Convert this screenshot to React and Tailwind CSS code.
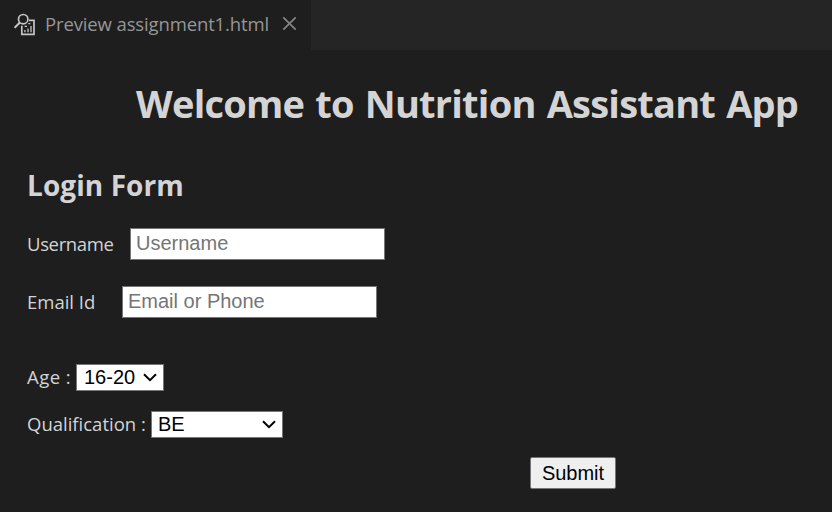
const label = "shrink-0 whitespace-nowrap leading-6";
const control = "box-border border border-[#767676] bg-white font-['Liberation_Sans',Arial,sans-serif] text-[20px] leading-6";

function PreviewIcon() {
  return (
    <svg width="22" height="24" viewBox="0 0 22 24" fill="none" stroke="#c5c5c5" className="shrink-0">
      <circle cx="9.2" cy="6.2" r="4.7" strokeWidth="1.7" />
      <path d="M5.8 9.6L.6 14.8" strokeWidth="2.1" />
      <path d="M15 7.4h5v14H7.8v-8.6" strokeWidth="1.7" />
      <path d="M14.3 10.6h2M10.6 13.4h2.4" strokeWidth="1.3" />
      <path d="M10.9 17v2.2M14 15.5v3.7M17 13v6.2" strokeWidth="1.3" />
    </svg>
  );
}

function Chevron() {
  return (
    <svg width="14" height="9" viewBox="0 0 14 9" fill="none" stroke="#000" strokeWidth="2" className="shrink-0">
      <path d="M1 1.2l6 6 6-6" />
    </svg>
  );
}

function Select({ value, className }) {
  return (
    <button type="button" className={`${control} flex h-[27px] shrink-0 items-center justify-between text-black ${className}`}>
      <span className="pb-px leading-6">{value}</span>
      <Chevron />
    </button>
  );
}

export default function App() {
  return (
    <div className="h-[512px] w-[832px] overflow-hidden bg-[#1e1e1e] font-['Open_Sans','Noto_Sans',sans-serif] text-[#d4d4d4]">
      <header className="flex h-[50px] bg-[#252526]">
        <div className="flex h-[50px] w-[311px] items-center bg-[#1e1e1e] pl-[14px]">
          <PreviewIcon />
          <span className="ml-[9px] w-[237px] whitespace-nowrap pb-[2px] text-[18.5px] leading-6 tracking-[-0.13px] text-[#969696]">Preview assignment1.html</span>
          <svg width="15" height="15" viewBox="0 0 15 15" stroke="#858585" strokeWidth="1.7" className="-mt-[3px] shrink-0">
            <path d="M1.3 1.3l12.4 12.4M13.7 1.3L1.3 13.7" />
          </svg>
        </div>
      </header>
      <main className="pl-[27px]">
        <h1 className="h-[54px] w-[780px] whitespace-nowrap pl-[109px] pt-[26px] text-[38px] font-bold leading-[54px] tracking-[-0.78px] [word-spacing:2px]">Welcome to Nutrition Assistant App</h1>
        <h2 className="mt-[61px] whitespace-nowrap text-[28px] font-bold leading-10 tracking-[0.08px]">Login Form</h2>
        <form>
          <div className="mt-[23px] flex h-8 items-center">
            <label className={`${label} w-[103px] text-[18.5px] tracking-[-0.35px]`}>Username</label>
            <input placeholder="Username" className={`${control} h-8 w-[255px] px-[5px] pb-[2px] placeholder:text-[#757575]`} />
          </div>
          <div className="mt-[26px] flex h-8 items-center">
            <label className={`${label} w-[95px] text-[18.5px]`}>Email Id</label>
            <input placeholder="Email or Phone" className={`${control} h-8 w-[255px] px-[5px] pb-[2px] placeholder:text-[#757575]`} />
          </div>
          <div className="mt-[46px] flex h-[27px] items-center">
            <label className={`${label} w-[49px] pb-[2px] text-[18.5px] tracking-[0.45px]`}>Age :</label>
            <Select value="16-20" className="w-[88px] pl-[7px] pr-[6px]" />
          </div>
          <div className="mt-5 flex h-[27px] items-center">
            <label className={`${label} w-[124px] pb-[2px] text-[18.5px]`}>Qualification :</label>
            <Select value="BE" className="w-[132px] pl-[6px] pr-[6px]" />
          </div>
          <div className="mt-[19px] pl-[503px]">
            <button type="button" className="block h-8 w-[86px] rounded-[2px] border border-[#767676] bg-[#efefef] font-['Liberation_Sans',Arial,sans-serif] text-[20px] leading-6 text-black">Submit</button>
          </div>
        </form>
      </main>
    </div>
  );
}
